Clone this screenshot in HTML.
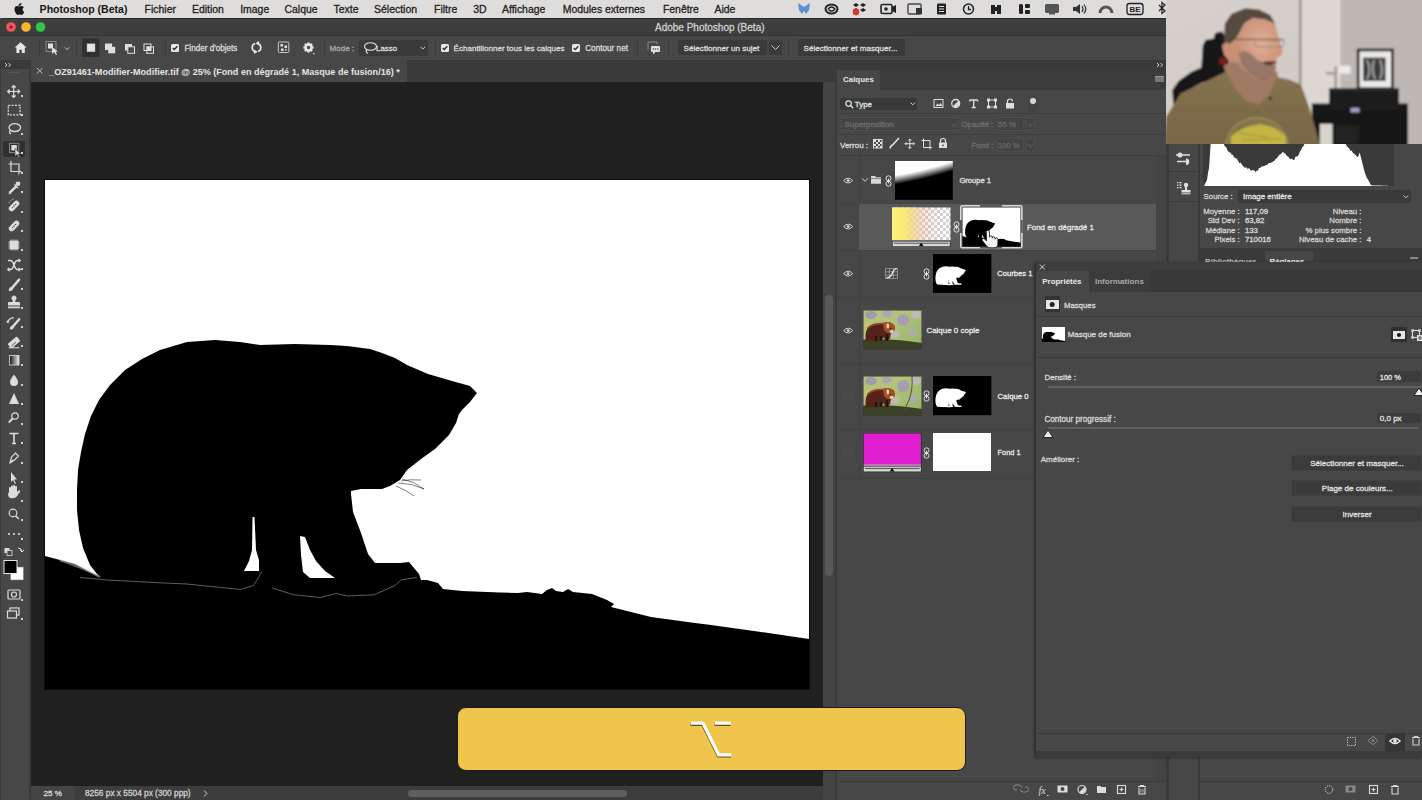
<!DOCTYPE html>
<html><head><meta charset="utf-8">
<style>
*{margin:0;padding:0;box-sizing:border-box}
html,body{width:1422px;height:800px;overflow:hidden;background:#474747;font-family:"Liberation Sans",sans-serif;}
.a{position:absolute}
.t{position:absolute;white-space:nowrap;line-height:1;-webkit-text-stroke:0.3px currentColor}
svg{position:absolute;overflow:visible}
</style></head><body>
<div class="a" style="left:0px;top:0px;width:1166px;height:18px;background:#dfdddc;"></div>
<svg style="left:14px;top:3px" width="11" height="12" viewBox="0 0 11 12"><path fill="#1a1a1a" d="M7.4,0 C7.5,1 7,2 6.3,2.6 C5.7,3.1 5,3.3 4.5,3.2 C4.4,2.3 4.9,1.3 5.5,0.8 C6,0.3 6.8,0 7.4,0 Z M9.9,4.2 C9.1,4.7 8.6,5.5 8.6,6.5 C8.6,7.7 9.3,8.6 10.3,9 C10,9.8 9.6,10.5 9.1,11.1 C8.6,11.7 8.1,12 7.5,12 C6.8,12 6.5,11.6 5.7,11.6 C4.9,11.6 4.5,12 3.9,12 C3.2,12 2.7,11.4 2.2,10.8 C1.2,9.5 0.5,7.7 0.5,6 C0.5,4.1 1.7,2.9 3.1,2.9 C3.9,2.9 4.5,3.4 5.1,3.4 C5.6,3.4 6.3,2.9 7.2,2.9 C8,2.9 9.2,3.2 9.9,4.2 Z"/></svg>
<div class="t" style="left:39.60px;top:4.00px;font-size:10.55px;color:#161616;font-weight:bold;-webkit-text-stroke:0;">Photoshop (Beta)</div>
<div class="t" style="left:144.60px;top:5.00px;font-size:10.45px;color:#222;font-weight:normal;">Fichier</div>
<div class="t" style="left:192.00px;top:5.00px;font-size:10.45px;color:#222;font-weight:normal;">Edition</div>
<div class="t" style="left:240.20px;top:5.00px;font-size:10.45px;color:#222;font-weight:normal;">Image</div>
<div class="t" style="left:284.50px;top:5.00px;font-size:10.45px;color:#222;font-weight:normal;">Calque</div>
<div class="t" style="left:333.50px;top:5.00px;font-size:10.45px;color:#222;font-weight:normal;">Texte</div>
<div class="t" style="left:374.10px;top:5.00px;font-size:10.45px;color:#222;font-weight:normal;">Sélection</div>
<div class="t" style="left:434.00px;top:5.00px;font-size:10.45px;color:#222;font-weight:normal;">Filtre</div>
<div class="t" style="left:473.30px;top:5.00px;font-size:10.45px;color:#222;font-weight:normal;">3D</div>
<div class="t" style="left:502.00px;top:5.00px;font-size:10.45px;color:#222;font-weight:normal;">Affichage</div>
<div class="t" style="left:562.70px;top:5.00px;font-size:10.45px;color:#222;font-weight:normal;">Modules externes</div>
<div class="t" style="left:662.90px;top:5.00px;font-size:10.45px;color:#222;font-weight:normal;">Fenêtre</div>
<div class="t" style="left:714.50px;top:5.00px;font-size:10.45px;color:#222;font-weight:normal;">Aide</div>
<svg style="left:797px;top:2px" width="370" height="14" viewBox="797 2 370 14">
<path fill="#5d8fd6" d="M798,3 L804,7 L810,3 L809,10 L806,14 L804,11 L802,14 L799,10 Z"/>
<ellipse cx="831.5" cy="9" rx="6" ry="4.5" fill="none" stroke="#222" stroke-width="2"/>
<path d="M828,9 q3.5,-4 7,0 q-3.5,4 -7,0" fill="none" stroke="#222" stroke-width="1.3"/>
<path fill="#222" d="M856,3 l3,2 l-3,2 l-3,-2z M863,3 l3,2 l-3,2 l-3,-2z M856,8 l3,2 l-3,2 l-3,-2z M863,8 l3,2 l-3,2 l-3,-2z"/>
<circle cx="856" cy="12" r="3.3" fill="#e0302a"/>
<rect x="881" y="4.5" width="11" height="9" rx="1.5" fill="none" stroke="#222" stroke-width="1.6"/>
<path fill="#222" d="M892,7 l4,-2 v8 l-4,-2z"/><circle cx="886" cy="9" r="1.8" fill="#222"/>
<rect x="908" y="4" width="13" height="10" rx="1" fill="none" stroke="#444" stroke-width="1.4"/>
<rect x="916" y="8" width="6" height="6" fill="#333"/>
<rect x="937" y="3.5" width="9" height="11" rx="1" fill="#222"/><rect x="939" y="6" width="5" height="1" fill="#ddd"/><rect x="939" y="8.5" width="5" height="1" fill="#ddd"/><rect x="939" y="11" width="5" height="1" fill="#ddd"/>
<circle cx="968.5" cy="9" r="5" fill="none" stroke="#222" stroke-width="1.5"/><path d="M968.5,6 v3.5 h2.5" fill="none" stroke="#222" stroke-width="1.3"/>
<path fill="#222" d="M991,5 h4 v2 h2 v-2 h4 v9 h-4 v-3 h-2 v3 h-4z"/>
<rect x="1019" y="4" width="4" height="10" rx="1.5" fill="#222"/><rect x="1025" y="4" width="5" height="4" rx="1" fill="#222"/><rect x="1025" y="10" width="5" height="4" rx="1" fill="#222"/>
<rect x="1045" y="4" width="14" height="9" rx="1.5" fill="#555"/><rect x="1049" y="13" width="6" height="1.5" fill="#555"/>
<path fill="#333" d="M1073,7 h3 l4,-3 v10 l-4,-3 h-3z"/><path d="M1082,6 q2,3 0,6 M1084,4.5 q3.5,4.5 0,9" fill="none" stroke="#333" stroke-width="1.2"/>
<path d="M1100,13 a6,6 0 1 1 12,0" fill="none" stroke="#555" stroke-width="3"/>
<rect x="1127" y="3.5" width="16" height="11" rx="2.5" fill="none" stroke="#222" stroke-width="1.3"/>
<text x="1135" y="12.3" font-size="8" font-weight="bold" text-anchor="middle" fill="#222" font-family="Liberation Sans">BE</text>
<path d="M1159,5 l6,6 l-3,2.5 v-11 l3,2.5 l-6,6" fill="none" stroke="#222" stroke-width="1.2"/>
</svg>
<div class="a" style="left:0px;top:18px;width:1166px;height:17px;background:#3e3e3e;border-top:1px solid #2a2a2a;border-radius:5px 0 0 0"></div>
<div class="a" style="left:4px;top:20px;width:1162px;height:1px;background:#434343;"></div>
<svg style="left:0;top:18px" width="60" height="18"><circle cx="11" cy="9" r="4.8" fill="#f2555b"/><circle cx="11" cy="9" r="1.6" fill="#8a1c22"/><circle cx="26" cy="9" r="4.8" fill="#f7b52e"/><circle cx="40.5" cy="9" r="4.8" fill="#31c847"/></svg>
<div class="t" style="left:655.00px;top:23.00px;font-size:10.0px;color:#cfcfcf;font-weight:normal;">Adobe Photoshop (Beta)</div>
<div class="a" style="left:0px;top:34.5px;width:1166px;height:1.6px;background:#343434;"></div>
<div class="a" style="left:0px;top:36px;width:1166px;height:23.6px;background:#474747;"></div>
<div class="a" style="left:39px;top:40px;width:1px;height:17px;background:#3c3c3c;"></div>
<div class="a" style="left:76px;top:40px;width:1px;height:17px;background:#3c3c3c;"></div>
<div class="a" style="left:164.5px;top:40px;width:1px;height:17px;background:#3c3c3c;"></div>
<div class="a" style="left:324px;top:40px;width:1px;height:17px;background:#3c3c3c;"></div>
<div class="a" style="left:435px;top:40px;width:1px;height:17px;background:#3c3c3c;"></div>
<div class="a" style="left:637px;top:40px;width:1px;height:17px;background:#3c3c3c;"></div>
<div class="a" style="left:668px;top:40px;width:1px;height:17px;background:#3c3c3c;"></div>
<div class="a" style="left:788px;top:40px;width:1px;height:17px;background:#3c3c3c;"></div>
<svg style="left:0;top:36px" width="1166" height="24" viewBox="0 36 1166 24">
<path fill="#e6e6e6" d="M20.6,42.2 L26.6,47.6 L24.8,47.6 L24.8,53 L21.8,53 L21.8,49.7 L19.4,49.7 L19.4,53 L16.4,53 L16.4,47.6 L14.6,47.6 Z"/>
<rect x="46" y="41.5" width="10" height="10" fill="none" stroke="#8a8a8a" stroke-width="1"/>
<rect x="48" y="43.5" width="5" height="5" fill="#e0e0e0"/>
<path fill="#e0e0e0" d="M52,47 L52,54 L54,52 L56,55 L57,54.5 L55.5,51.5 L58,51.5 Z"/>
<path d="M64.8,47.3 l2.3,2.3 l2.3,-2.3" fill="none" stroke="#c8c8c8" stroke-width="1"/>
<rect x="82.3" y="38.5" width="17" height="18.5" rx="1" fill="#303030"/>
<rect x="87" y="43.8" width="8" height="8" fill="#e4e4e4" stroke="#aaa" stroke-width="0.5"/>
<rect x="105" y="43.5" width="7" height="6.5" fill="#e0e0e0"/><rect x="108.2" y="46.8" width="7" height="6.5" fill="#e0e0e0"/>
<rect x="125" y="44" width="7" height="6.5" fill="#e0e0e0"/><rect x="127.8" y="46.8" width="6.7" height="6.5" fill="#484848" stroke="#e0e0e0" stroke-width="1"/>
<rect x="144" y="44" width="7" height="6.5" fill="none" stroke="#e0e0e0" stroke-width="1"/><rect x="146.8" y="46.8" width="6.7" height="6.5" fill="none" stroke="#e0e0e0" stroke-width="1"/><rect x="146.8" y="46.8" width="4.2" height="3.7" fill="#e0e0e0"/>
</svg>
<svg style="left:171px;top:43.8px" width="8" height="8" viewBox="0 0 8 8"><rect x="0" y="0" width="8" height="8" rx="1.5" fill="#e8e8e8"/><path d="M1.8,4 L3.3,5.6 L6.3,2.3" fill="none" stroke="#222" stroke-width="1.3"/></svg>
<div class="t" style="left:184.40px;top:45.00px;font-size:8.15px;color:#d8d8d8;font-weight:normal;">Finder d'objets</div>
<svg style="left:240px;top:36px" width="200" height="24" viewBox="240 36 200 24">
<path d="M255,43.46 A4.3,4.3 0 0 0 255,51.54 M258,51.54 A4.3,4.3 0 0 0 258,43.46" fill="none" stroke="#e6e6e6" stroke-width="1.7"/>
<path fill="#e6e6e6" d="M253.8,49.6 L257.8,51.7 L254,53.9 Z M259.2,41.1 L255.2,43.3 L259,45.4 Z"/>
<rect x="278.3" y="42" width="10.5" height="10.5" rx="1" fill="none" stroke="#c8c8c8" stroke-width="1"/>
<rect x="280.5" y="44" width="2.5" height="2.5" fill="#e0e0e0"/><rect x="284.5" y="45.5" width="2.5" height="2.5" fill="#e0e0e0"/><rect x="281" y="48.5" width="2.5" height="2.5" fill="#e0e0e0"/><rect x="285" y="49" width="1.5" height="1.5" fill="#e0e0e0"/>
<path fill="#e6e6e6" fill-rule="evenodd" d="M313.57,46.37 L313.57,48.63 L312.15,48.87 L312.05,49.11 L312.89,50.29 L311.29,51.89 L310.11,51.05 L309.87,51.15 L309.63,52.57 L307.37,52.57 L307.13,51.15 L306.89,51.05 L305.71,51.89 L304.11,50.29 L304.95,49.11 L304.85,48.87 L303.43,48.63 L303.43,46.37 L304.85,46.13 L304.95,45.89 L304.11,44.71 L305.71,43.11 L306.89,43.95 L307.13,43.85 L307.37,42.43 L309.63,42.43 L309.87,43.85 L310.11,43.95 L311.29,43.11 L312.89,44.71 L312.05,45.89 L312.15,46.13Z M310.2,47.5 A1.7,1.7 0 1 0 306.8,47.5 A1.7,1.7 0 1 0 310.2,47.5Z"/>
<rect x="313" y="53" width="1.5" height="1.2" fill="#ddd"/>
</svg>
<div class="t" style="left:329.60px;top:45.00px;font-size:8.0px;color:#a9a9a9;font-weight:normal;">Mode :</div>
<div class="a" style="left:359px;top:40px;width:68.5px;height:15.5px;background:#3a3a3a;border-radius:2px"></div>
<svg style="left:363px;top:41px" width="16" height="14" viewBox="0 0 16 14"><ellipse cx="7.5" cy="5.5" rx="6" ry="3.8" fill="none" stroke="#e0e0e0" stroke-width="1.1"/><path d="M3.5,8.5 q-1,3 1.5,4" fill="none" stroke="#e0e0e0" stroke-width="1.1"/></svg>
<div class="t" style="left:376.10px;top:45.00px;font-size:7.9px;color:#dcdcdc;font-weight:normal;">Lasso</div>
<svg style="left:420px;top:46px" width="6" height="4"><path d="M0.5,0.8 l2.3,2.3 l2.3,-2.3" fill="none" stroke="#cfcfcf" stroke-width="1"/></svg>
<svg style="left:440.8px;top:43.8px" width="8" height="8" viewBox="0 0 8 8"><rect x="0" y="0" width="8" height="8" rx="1.5" fill="#e8e8e8"/><path d="M1.8,4 L3.3,5.6 L6.3,2.3" fill="none" stroke="#222" stroke-width="1.3"/></svg>
<div class="t" style="left:453.60px;top:45.00px;font-size:8.05px;color:#d8d8d8;font-weight:normal;">Échantillonner tous les calques</div>
<svg style="left:572.4px;top:43.8px" width="8" height="8" viewBox="0 0 8 8"><rect x="0" y="0" width="8" height="8" rx="1.5" fill="#e8e8e8"/><path d="M1.8,4 L3.3,5.6 L6.3,2.3" fill="none" stroke="#222" stroke-width="1.3"/></svg>
<div class="t" style="left:585.20px;top:45.00px;font-size:8.2px;color:#d8d8d8;font-weight:normal;">Contour net</div>
<svg style="left:647px;top:41px" width="14" height="14" viewBox="0 0 14 14"><path d="M1,9 V1 H10 V3" fill="none" stroke="#8a8a8a" stroke-width="1"/><rect x="4" y="5" width="9" height="6" rx="1" fill="#e0e0e0"/><path fill="#e0e0e0" d="M6,11 L6,13.5 L8.5,11z"/><circle cx="6.3" cy="8" r="0.8" fill="#484848"/><circle cx="8.5" cy="8" r="0.8" fill="#484848"/><circle cx="10.7" cy="8" r="0.8" fill="#484848"/></svg>
<div class="a" style="left:678px;top:39.9px;width:88.5px;height:15.5px;background:#3a3a3a;border-radius:2px"></div>
<div class="t" style="left:683.60px;top:45.00px;font-size:8.12px;color:#dcdcdc;font-weight:normal;">Sélectionner un sujet</div>
<div class="a" style="left:769px;top:39.9px;width:13px;height:15.5px;background:#3a3a3a;border-radius:2px"></div>
<svg style="left:771px;top:45px" width="9" height="5"><path d="M0.5,0.5 l4,4 l4,-4" fill="none" stroke="#cfcfcf" stroke-width="1"/></svg>
<div class="a" style="left:797.7px;top:39.4px;width:107px;height:16.3px;background:#3a3a3a;border-radius:2px"></div>
<div class="t" style="left:803.60px;top:45.00px;font-size:8.08px;color:#dcdcdc;font-weight:normal;">Sélectionner et masquer...</div>
<div class="a" style="left:0px;top:60px;width:31px;height:740px;background:#3a3a3a;"></div>
<div class="a" style="left:1.3px;top:60px;width:27.7px;height:740px;background:#474747;"></div>
<div class="a" style="left:1.3px;top:60px;width:27.7px;height:8.8px;background:#393939;"></div>
<div class="a" style="left:8px;top:72px;width:12px;height:1.2px;background:#555;"></div>
<svg style="left:4px;top:62px" width="12" height="6" viewBox="0 0 12 6"><path d="M1,1 l2,2 l-2,2 M4.5,1 l2,2 l-2,2" fill="none" stroke="#cfcfcf" stroke-width="1"/></svg>
<div class="a" style="left:3px;top:140.6px;width:22px;height:16.5px;background:#2f2f2f;border-radius:2px"></div>
<svg style="left:0;top:80px" width="30" height="545" viewBox="0 80 30 545" fill="none" stroke="#dcdcdc" stroke-width="1.2">
<path d="M13.7,85.5 v12 M7.7,91.5 h12 M11.7,87.5 l2,-2 l2,2 M11.7,95.5 l2,2 l2,-2 M9.7,89.5 l-2,2 l2,2 M17.7,89.5 l2,2 l-2,2"/>
<rect x="8.3" y="105.3" width="11.8" height="9.6" stroke-dasharray="2 1.3" stroke-width="1.3"/>
<ellipse cx="14.8" cy="127.6" rx="5.8" ry="3.9" stroke-width="1.3"/><path d="M10.5,130.3 q-2,2.2 0.5,3.6" stroke-width="1.3"/>
<rect x="9.5" y="143.3" width="9.3" height="9.3" stroke="#8a8a8a" stroke-width="1"/><rect x="11.3" y="145" width="5.5" height="5.5" fill="#dcdcdc" stroke="none"/><path d="M15,148.5 v8 l2,-2 l1.8,3 l1.1,-0.6 l-1.6,-2.8 h2.6z" fill="#dcdcdc" stroke="#2f2f2f" stroke-width="0.6"/>
<path d="M11,161 v10.5 h10.5 M8.5,164 h10.5 v10.5"/>
<path fill="#dcdcdc" stroke="none" d="M8.5,194.5 L9.2,191.5 L15,185.7 L16.8,187.5 L11,193.3 Z"/><circle cx="18" cy="183.8" r="2.3" fill="#dcdcdc" stroke="none"/><path d="M14.5,184.5 l3.5,3.5" stroke-width="1.4"/>
<rect x="7.8" y="203.2" width="12.5" height="5.6" rx="2.8" fill="#dcdcdc" stroke="none" transform="rotate(-45 14 206)"/><circle cx="14" cy="206" r="0.8" fill="#474747" stroke="none"/><circle cx="12.4" cy="207.6" r="0.7" fill="#474747" stroke="none"/><circle cx="15.6" cy="204.4" r="0.7" fill="#474747" stroke="none"/><path d="M9,203 a6,6 0 0 1 5,-4" stroke-dasharray="1 1" stroke-width="1"/>
<rect x="7.8" y="223.2" width="12.5" height="5.6" rx="2.8" fill="#dcdcdc" stroke="none" transform="rotate(-45 14 226)"/><circle cx="14" cy="226" r="0.8" fill="#474747" stroke="none"/><circle cx="12.4" cy="227.6" r="0.7" fill="#474747" stroke="none"/><circle cx="15.6" cy="224.4" r="0.7" fill="#474747" stroke="none"/>
<rect x="9.8" y="240.8" width="8.5" height="8.5" fill="#dcdcdc" stroke="none"/><path d="M11,239.5 v1.5 M13,239.5 v1.5 M15,239.5 v1.5 M17,239.5 v1.5 M11,249 v1.5 M13,249 v1.5 M15,249 v1.5 M17,249 v1.5 M8.5,242 h1.5 M8.5,244 h1.5 M8.5,246 h1.5 M8.5,248 h1.5 M18,242 h1.5 M18,244 h1.5 M18,246 h1.5 M18,248 h1.5" stroke-width="0.9"/>
<path d="M8,260.5 h2.5 q2,0 3.5,4.5 q1.5,4.5 3.5,4.5 h2.5 M8,269.5 h2.5 q2,0 3.5,-4.5 q1.5,-4.5 3.5,-4.5 h2.5" stroke-width="1.5"/><path fill="#dcdcdc" stroke="none" d="M18.5,258.3 l2.8,2.2 l-2.8,2.2z M18.5,267.3 l2.8,2.2 l-2.8,2.2z M9.5,267.3 l-2.8,2.2 l2.8,2.2z"/>
<path fill="#dcdcdc" stroke="none" d="M8.8,291 q-0.3,-3.5 2.8,-4.6 l6.6,-7.6 q1,-0.9 1.8,0 q0.8,0.8 0,1.8 l-6.6,7.6 q-0.8,3 -4.6,2.8z"/>
<path fill="#dcdcdc" stroke="none" d="M12.6,302 v-2 a2.4,2.4 0 1 1 2.8,0 v2 h3.6 q1,0 1,1 v2.6 h-12 v-2.6 q0,-1 1,-1z M8,306.6 h12 v1.6 h-12z"/>
<path fill="#dcdcdc" stroke="none" d="M10,329.5 q-0.3,-3.2 2.5,-4.2 l6,-7 q0.9,-0.8 1.6,0 q0.7,0.7 0,1.6 l-6,7 q-0.7,2.8 -4.1,2.6z"/><path d="M8,322 a5,5 0 0 1 6,-4" stroke-width="1.2"/><path fill="#dcdcdc" stroke="none" d="M7,320 l2.5,2.5 l-3,0.5z"/>
<rect x="8" y="339.5" width="12" height="6" rx="1" fill="#dcdcdc" stroke="none" transform="rotate(-40 14 342.5)"/><path d="M8.5,347.8 h11" stroke-width="1"/><path d="M11.5,346 l4.5,-4" stroke="#474747" stroke-width="0.9"/>
<defs><linearGradient id="gr"><stop offset="0" stop-color="#111"/><stop offset="1" stop-color="#eee"/></linearGradient></defs><rect x="9.5" y="355.5" width="9.5" height="9.5" fill="url(#gr)" stroke="#ddd" stroke-width="0.8"/>
<path d="M14,374.5 q-4,5 -4,7.5 a4,4 0 0 0 8,0 q0,-2.5 -4,-7.5z" fill="#dcdcdc" stroke="none"/>
<path d="M14,393 l5,11 h-10z" fill="#dcdcdc" stroke="none"/>
<circle cx="15" cy="416" r="3.2"/><path d="M12.7,418.5 l-4,4" stroke-width="1.8"/>
<path d="M9.5,433.5 h9 M14,433.5 v10 M12,443.5 h4" stroke-width="1.6"/>
<path d="M10,463 l1.5,-6 l4,-4 l3,3 l-4,4z M10,463 l3,-3"/>
<path d="M11,472 v10 l2,-2 l2,4 l1,-0.5 l-2,-4 h3z" fill="#dcdcdc" stroke="none"/>
<path fill="#dcdcdc" stroke="none" d="M9,492 v-4 a1,1 0 0 1 2,0 v-1.5 a1,1 0 0 1 2,0 v-0.5 a1,1 0 0 1 2,0 v1 a1,1 0 0 1 2,0 v5 l1.5,-1.5 a1,1 0 0 1 1.5,1.3 l-3,4.5 q-1.5,2 -4,2 h-1 q-4,0 -4,-4.5z"/>
<circle cx="13" cy="513" r="3.8"/><path d="M15.8,516 l3,3" stroke-width="1.6"/>
<circle cx="9" cy="534" r="1.1" fill="#dcdcdc" stroke="none"/><circle cx="14" cy="534" r="1.1" fill="#dcdcdc" stroke="none"/><circle cx="19" cy="534" r="1.1" fill="#dcdcdc" stroke="none"/>
<rect x="4.5" y="548" width="5" height="5" fill="#dcdcdc" stroke="none"/><rect x="7" y="550.5" width="5" height="5" fill="#474747" stroke="#dcdcdc" stroke-width="0.8"/>
<path d="M18,548 q4,0 4,4 M20,550 l2,2 l2,-2" stroke-width="1"/>
<rect x="10.5" y="567" width="13" height="13" fill="#fff" stroke="#777" stroke-width="0.6"/>
<rect x="4" y="560.5" width="13" height="13" fill="#000" stroke="#e8e8e8" stroke-width="1"/>
<rect x="8" y="590" width="12" height="9" rx="1"/><circle cx="14" cy="594.5" r="2.5"/>
<rect x="10" y="608" width="9" height="7"/><rect x="7.5" y="611" width="9" height="7" fill="#474747"/>
</svg>
<div class="a" style="left:21px;top:95px;width:1.5px;height:1.5px;background:#cfcfcf"></div>
<div class="a" style="left:21px;top:114px;width:1.5px;height:1.5px;background:#cfcfcf"></div>
<div class="a" style="left:21px;top:133px;width:1.5px;height:1.5px;background:#cfcfcf"></div>
<div class="a" style="left:21px;top:152px;width:1.5px;height:1.5px;background:#cfcfcf"></div>
<div class="a" style="left:21px;top:172px;width:1.5px;height:1.5px;background:#cfcfcf"></div>
<div class="a" style="left:21px;top:191px;width:1.5px;height:1.5px;background:#cfcfcf"></div>
<div class="a" style="left:21px;top:211px;width:1.5px;height:1.5px;background:#cfcfcf"></div>
<div class="a" style="left:21px;top:230px;width:1.5px;height:1.5px;background:#cfcfcf"></div>
<div class="a" style="left:21px;top:249px;width:1.5px;height:1.5px;background:#cfcfcf"></div>
<div class="a" style="left:21px;top:268px;width:1.5px;height:1.5px;background:#cfcfcf"></div>
<div class="a" style="left:21px;top:288px;width:1.5px;height:1.5px;background:#cfcfcf"></div>
<div class="a" style="left:21px;top:307px;width:1.5px;height:1.5px;background:#cfcfcf"></div>
<div class="a" style="left:21px;top:326px;width:1.5px;height:1.5px;background:#cfcfcf"></div>
<div class="a" style="left:21px;top:345px;width:1.5px;height:1.5px;background:#cfcfcf"></div>
<div class="a" style="left:21px;top:364px;width:1.5px;height:1.5px;background:#cfcfcf"></div>
<div class="a" style="left:21px;top:384px;width:1.5px;height:1.5px;background:#cfcfcf"></div>
<div class="a" style="left:21px;top:403px;width:1.5px;height:1.5px;background:#cfcfcf"></div>
<div class="a" style="left:21px;top:423px;width:1.5px;height:1.5px;background:#cfcfcf"></div>
<div class="a" style="left:21px;top:442px;width:1.5px;height:1.5px;background:#cfcfcf"></div>
<div class="a" style="left:21px;top:462px;width:1.5px;height:1.5px;background:#cfcfcf"></div>
<div class="a" style="left:21px;top:481px;width:1.5px;height:1.5px;background:#cfcfcf"></div>
<div class="a" style="left:21px;top:500px;width:1.5px;height:1.5px;background:#cfcfcf"></div>
<div class="a" style="left:21px;top:519px;width:1.5px;height:1.5px;background:#cfcfcf"></div>
<div class="a" style="left:21px;top:538px;width:1.5px;height:1.5px;background:#cfcfcf"></div>
<div class="a" style="left:21px;top:599px;width:1.5px;height:1.5px;background:#cfcfcf"></div>
<div class="a" style="left:21px;top:618px;width:1.5px;height:1.5px;background:#cfcfcf"></div>
<div class="a" style="left:29px;top:60px;width:806px;height:22px;background:#3a3a3a;"></div>
<div class="a" style="left:31px;top:60px;width:376px;height:22px;background:#474747;"></div>
<svg style="left:36px;top:67px" width="8" height="8"><path d="M1,1 l5.5,5.5 M6.5,1 l-5.5,5.5" stroke="#bdbdbd" stroke-width="1"/></svg>
<div class="t" style="left:49.10px;top:68.00px;font-size:9.06px;color:#e4e4e4;font-weight:bold;-webkit-text-stroke:0;">_OZ91461-Modifier-Modifier.tif @ 25% (Fond en dégradé 1, Masque de fusion/16) *</div>
<div class="a" style="left:31px;top:82px;width:792px;height:704px;background:#202020;"></div>
<svg style="left:44px;top:179px" width="766" height="511" viewBox="44 179 766 511">
<rect x="44" y="179" width="766" height="511" fill="#0a0a0a"/>
<rect x="45" y="180" width="764" height="509" fill="#fff"/>
<defs><clipPath id="imgc"><rect x="45" y="180" width="764" height="509"/></clipPath><filter id="fur" x="-5%" y="-5%" width="110%" height="110%"><feGaussianBlur stdDeviation="0.55"/></filter></defs>
<g clip-path="url(#imgc)"><g filter="url(#fur)">
<path fill="#000" d="M40,555 L45,556 L60,560 L75,564 L90,572 L103,578 L155,582 L264,587 L330,581 L421,580 L427,580 L438,583 L443,589 L462,591 L500,592.5 L518,593 L527,592 L542,594 L547,590 L552,588 L556,591 L563,592 L568,589 L573,592 L592,594 L607,600 L614,604 L611,607 L627,611 L651,617 L695,623 L711,625 L754,631 L809,639 L814,640 L814,694 L40,694 Z M100,578 L90,565 L83,548 L79,530 L77,510 L77,490 L78,470 L81,452 L85,434 L91,416 L99,400 L110,385 L125,370 L142,359 L160,350 L187,342 L215,340 L240,342 L260,345 L295,344 L330,345 L347,346 L370,349 L382,353 L395,358 L407,365 L428,374 L452,381 L470,386 L477,393 L470,402 L462,410 L459,414 L456,423 L449,435 L435,449 L421,459 L407,470 L400,480 L390,486 L382,489 L361,489 L351,491 L351,494 L353,512 L361,533 L368,554 L375,563 L400,563 L409,562 L414,568 L419,574 L421,580 L400,583 L330,581 L264,587 L155,582 Z"/>
<path fill="#fff" d="M252.5,517 L254.5,517 L256,550 L259,560 L259,571 L244,571 L249,561 L252,550 Z M300,536 L305,537 L310,550 L316,561 L325,571 L335,578 L310,578 L303,572 L301,555 Z"/>
</g></g>
<path d="M80,577.4 L106.7,580 L133.4,581.4 L160,582.8 L187,584 L213.6,586.8 L240.3,589.4 L253.7,585.4 L261.7,572 M272.4,588 L293.8,594.8 L320.5,597.5 L336.5,593.4 L347.2,596 L374,594.8 L395.3,585.4 L400.7,580 L416.7,577.4" fill="none" stroke="#a8a8a8" stroke-width="0.7" stroke-opacity="0.8"/>
<path d="M60,560 Q85,568 100,577" fill="none" stroke="#cfcfcf" stroke-width="2.5" stroke-opacity="0.5"/>
<path d="M402,479 q12,2 22,10 M398,483 q14,0 26,6 M396,486 q10,4 18,10 M401,481 q9,-2 20,-1" fill="none" stroke="#000" stroke-width="0.5"/>
</svg>
<div class="a" style="left:31px;top:786px;width:792px;height:14px;background:#3d3d3d;"></div>
<div class="a" style="left:31px;top:786px;width:43px;height:14px;background:#444;"></div>
<div class="t" style="left:43.60px;top:790.00px;font-size:8.1px;color:#dadada;font-weight:normal;">25 %</div>
<div class="t" style="left:85.00px;top:789.00px;font-size:8.3px;color:#cfcfcf;font-weight:normal;">8256 px x 5504 px (300 ppp)</div>
<svg style="left:203px;top:790px" width="6" height="8"><path d="M1,0.5 l3,3 l-3,3" fill="none" stroke="#cfcfcf" stroke-width="1"/></svg>
<div class="a" style="left:408px;top:790px;width:219px;height:7px;background:#5e5e5e;border-radius:3.5px"></div>
<div class="a" style="left:823px;top:82px;width:12px;height:718px;background:#444;"></div>
<div class="a" style="left:824.8px;top:295px;width:8.2px;height:280.5px;background:#595959;border-radius:4px"></div>
<div class="a" style="left:835px;top:60px;width:331px;height:740px;background:#3a3a3a;"></div>
<div class="a" style="left:837px;top:60px;width:329px;height:10px;background:#3a3a3a;"></div>
<svg style="left:1156px;top:62px" width="8" height="6"><path d="M1,1 l2,2 l-2,2 M4.5,1 l2,2 l-2,2" fill="none" stroke="#cfcfcf" stroke-width="1"/></svg>
<div class="a" style="left:837px;top:70px;width:329px;height:20px;background:#3c3c3c;"></div>
<div class="a" style="left:837px;top:70px;width:43px;height:20px;background:#474747;"></div>
<div class="t" style="left:843.10px;top:76.00px;font-size:7.9px;color:#e8e8e8;font-weight:bold;-webkit-text-stroke:0;">Calques</div>
<div class="a" style="left:1155px;top:76px;width:9px;height:6px;background:#777;border-top:1px solid #999"></div>
<div class="a" style="left:837px;top:90px;width:329px;height:710px;background:#474747;"></div>
<div class="a" style="left:840px;top:98px;width:77px;height:12px;background:#383838;border-radius:2px"></div>
<svg style="left:845px;top:100px" width="9" height="9"><circle cx="3.6" cy="3.6" r="2.7" fill="none" stroke="#e0e0e0" stroke-width="1.2"/><path d="M5.6,5.6 l2.6,2.6" stroke="#e0e0e0" stroke-width="1.4"/></svg>
<div class="t" style="left:854.80px;top:101.00px;font-size:7.9px;color:#e0e0e0;font-weight:normal;">Type</div>
<svg style="left:910px;top:102px" width="6" height="4"><path d="M0.5,0.5 l2.3,2.3 l2.3,-2.3" fill="none" stroke="#cfcfcf" stroke-width="1"/></svg>
<svg style="left:930px;top:96px" width="110" height="16" viewBox="930 96 110 16" fill="none" stroke="#dedede" stroke-width="1">
<rect x="934" y="99.5" width="9" height="8" /><path d="M935.5,106 l2,-2.5 l1.5,1.5 l1.5,-2 l2,3z" fill="#dedede" stroke="none"/>
<circle cx="955.7" cy="103.5" r="4" stroke-width="1.3"/><path d="M958.5,100.7 a4,4 0 0 1 -5.6,5.6z" fill="#dedede" stroke="none"/>
<path d="M969.7,100 h8 M973.7,100 v7.5 M971.7,107.5 h4 M969.7,100 v1.5 M977.7,100 v1.5" stroke-width="1.3"/>
<rect x="988.5" y="100" width="7" height="7"/><rect x="987.5" y="99" width="2" height="2" fill="#dedede"/><rect x="994.5" y="99" width="2" height="2" fill="#dedede"/><rect x="987.5" y="106" width="2" height="2" fill="#dedede"/><rect x="994.5" y="106" width="2" height="2" fill="#dedede"/>
<rect x="1006" y="103" width="8" height="5.5" fill="#dedede" stroke="none"/><path d="M1007.5,103 v-1.5 a2.5,2.5 0 0 1 5,0" stroke-width="1.2"/>
<rect x="1029.5" y="100" width="7" height="11" rx="3.5" stroke="#3a3a3a" fill="#444"/><circle cx="1033" cy="101" r="3" fill="#d6d6d6" stroke="none"/>
</svg>
<div class="a" style="left:837px;top:113px;width:329px;height:1px;background:#3e3e3e;"></div>
<div class="a" style="left:841px;top:117px;width:117px;height:13.5px;background:#444;border:1px solid #4c4c4c;border-radius:2px"></div>
<div class="t" style="left:844.60px;top:121.00px;font-size:8.06px;color:#6e6e6e;font-weight:normal;">Superposition</div>
<svg style="left:951px;top:123px" width="6" height="4"><path d="M0.5,0.5 l2.3,2.3 l2.3,-2.3" fill="none" stroke="#666" stroke-width="1"/></svg>
<div class="t" style="left:961.40px;top:121.00px;font-size:7.97px;color:#6e6e6e;font-weight:normal;">Opacité :</div>
<div class="a" style="left:997px;top:117px;width:27px;height:13.5px;background:#434343;border:1px solid #4c4c4c"></div>
<div class="t" style="left:998.10px;top:121.00px;font-size:7.8px;color:#666;font-weight:normal;">55 %</div>
<div class="a" style="left:1026px;top:117px;width:9px;height:13.5px;background:#434343;border:1px solid #4c4c4c"></div>
<svg style="left:1028px;top:123px" width="6" height="4"><path d="M0.5,0.5 l2.3,2.3 l2.3,-2.3" fill="none" stroke="#666" stroke-width="1"/></svg>
<div class="a" style="left:837px;top:134px;width:329px;height:1px;background:#3e3e3e;"></div>
<div class="t" style="left:840.00px;top:142.00px;font-size:8.02px;color:#dadada;font-weight:normal;">Verrou :</div>
<svg style="left:870px;top:136px" width="80" height="16" viewBox="870 136 80 16" fill="none" stroke="#e0e0e0">
<rect x="873.5" y="139.5" width="8.5" height="8.5" stroke-width="1"/><rect x="874" y="140" width="2" height="2" fill="#e0e0e0" stroke="none"/><rect x="878" y="140" width="2" height="2" fill="#e0e0e0" stroke="none"/><rect x="876" y="142" width="2" height="2" fill="#e0e0e0" stroke="none"/><rect x="880" y="142" width="2" height="2" fill="#e0e0e0" stroke="none"/><rect x="874" y="144" width="2" height="2" fill="#e0e0e0" stroke="none"/><rect x="878" y="144" width="2" height="2" fill="#e0e0e0" stroke="none"/><rect x="876" y="146" width="2" height="2" fill="#e0e0e0" stroke="none"/><rect x="880" y="146" width="2" height="2" fill="#e0e0e0" stroke="none"/>
<path d="M890,148.5 q0.5,-3 2.5,-3.5 l6.5,-7" stroke-width="1.6"/>
<path d="M909.8,139 v9.5 M905,143.7 h9.5 M908.3,140.5 l1.5,-1.5 l1.5,1.5 M908.3,147 l1.5,1.5 l1.5,-1.5 M906.5,142.2 l-1.5,1.5 l1.5,1.5 M913,142.2 l1.5,1.5 l-1.5,1.5" stroke-width="1"/>
<path d="M923.5,138.5 v9 h8.5 M921.5,140.5 h8.5 v9" stroke-width="1"/>
<rect x="939" y="142.5" width="8" height="5.5" fill="#e0e0e0" stroke="none"/><path d="M940.5,142.5 v-1.5 a2.5,2.5 0 0 1 5,0 v1.5" stroke-width="1.2"/><circle cx="943" cy="145.3" r="0.9" fill="#474747" stroke="none"/>
</svg>
<div class="t" style="left:971.50px;top:142.00px;font-size:7.7px;color:#6e6e6e;font-weight:normal;">Fond :</div>
<div class="a" style="left:997px;top:138px;width:27px;height:13.5px;background:#434343;border:1px solid #4c4c4c"></div>
<div class="t" style="left:998.10px;top:142.00px;font-size:7.6px;color:#666;font-weight:normal;">100 %</div>
<div class="a" style="left:1026px;top:138px;width:9px;height:13.5px;background:#434343;border:1px solid #4c4c4c"></div>
<svg style="left:1028px;top:144px" width="6" height="4"><path d="M0.5,0.5 l2.3,2.3 l2.3,-2.3" fill="none" stroke="#666" stroke-width="1"/></svg>
<div class="a" style="left:837px;top:155px;width:329px;height:1px;background:#3e3e3e;"></div>
<div class="a" style="left:858.5px;top:156px;width:1px;height:322px;background:#404040;"></div>
<div class="a" style="left:1156px;top:156px;width:10px;height:625px;background:#444;"></div>
<div class="a" style="left:837px;top:203.5px;width:319px;height:1px;background:#404040;"></div>
<div class="a" style="left:837px;top:249.5px;width:319px;height:1px;background:#404040;"></div>
<div class="a" style="left:837px;top:296.7px;width:319px;height:1px;background:#404040;"></div>
<div class="a" style="left:837px;top:362.8px;width:319px;height:1px;background:#404040;"></div>
<div class="a" style="left:837px;top:429.3px;width:319px;height:1px;background:#404040;"></div>
<div class="a" style="left:837px;top:478px;width:319px;height:1px;background:#404040;"></div>
<div class="a" style="left:859px;top:204px;width:297px;height:45.5px;background:#595959;"></div>
<svg style="left:843.0px;top:176.9px" width="10.4" height="7.2" viewBox="0 0 10.4 7.2"><path d="M0.7,3.6 Q5.2,-1.2 9.7,3.6 Q5.2,8.4 0.7,3.6z" fill="none" stroke="#d4d4d4" stroke-width="1"/><circle cx="5.2" cy="3.6" r="1.45" fill="#d4d4d4"/></svg>
<svg style="left:843.0px;top:223.4px" width="10.4" height="7.2" viewBox="0 0 10.4 7.2"><path d="M0.7,3.6 Q5.2,-1.2 9.7,3.6 Q5.2,8.4 0.7,3.6z" fill="none" stroke="#d4d4d4" stroke-width="1"/><circle cx="5.2" cy="3.6" r="1.45" fill="#d4d4d4"/></svg>
<svg style="left:843.0px;top:270.2px" width="10.4" height="7.2" viewBox="0 0 10.4 7.2"><path d="M0.7,3.6 Q5.2,-1.2 9.7,3.6 Q5.2,8.4 0.7,3.6z" fill="none" stroke="#d4d4d4" stroke-width="1"/><circle cx="5.2" cy="3.6" r="1.45" fill="#d4d4d4"/></svg>
<svg style="left:843.0px;top:326.9px" width="10.4" height="7.2" viewBox="0 0 10.4 7.2"><path d="M0.7,3.6 Q5.2,-1.2 9.7,3.6 Q5.2,8.4 0.7,3.6z" fill="none" stroke="#d4d4d4" stroke-width="1"/><circle cx="5.2" cy="3.6" r="1.45" fill="#d4d4d4"/></svg>
<div class="a" style="left:844px;top:392.5px;width:8px;height:8px;background:transparent;border:1px solid #4f4f4f;border-radius:1px"></div>
<div class="a" style="left:844px;top:448.5px;width:8px;height:8px;background:transparent;border:1px solid #4f4f4f;border-radius:1px"></div>
<svg style="left:861px;top:176px" width="22" height="9" viewBox="861 176 22 9"><path d="M862,178.3 l3,3 l3,-3" fill="none" stroke="#d8d8d8" stroke-width="1"/><path d="M871,176 h4 l1,1.2 h5 v6.6 h-10z" fill="#d8d8d8"/><path d="M871,178.6 h10" stroke="#474747" stroke-width="0.6"/></svg>
<svg style="left:885.2px;top:174.5px" width="7" height="12" viewBox="0 0 7 12"><rect x="1" y="0.8" width="5" height="5" rx="2.5" fill="none" stroke="#e0e0e0" stroke-width="1"/><rect x="1" y="6.2" width="5" height="5" rx="2.5" fill="none" stroke="#e0e0e0" stroke-width="1"/><path d="M3.5,3.5 v5" stroke="#e0e0e0" stroke-width="1"/></svg>
<svg style="left:895.3px;top:160.9px" width="57.8" height="38.8" viewBox="0 0 57.8 38.8">
<defs><radialGradient id="g1" cx="-78" cy="-432" r="462.2" gradientUnits="userSpaceOnUse"><stop offset="0.9805" stop-color="#fff"/><stop offset="0.9903" stop-color="#858585"/><stop offset="1" stop-color="#000"/></radialGradient></defs>
<rect width="57.8" height="38.8" fill="url(#g1)"/></svg>
<div class="t" style="left:959.40px;top:177.00px;font-size:7.6px;color:#e0e0e0;font-weight:normal;">Groupe 1</div>
<svg style="left:892px;top:207px" width="58.5" height="40" viewBox="0 0 58.5 40">
<defs><pattern id="ck" width="6" height="6" patternUnits="userSpaceOnUse"><rect width="6" height="6" fill="#fff"/><rect width="3" height="3" fill="#cfcfd4"/><rect x="3" y="3" width="3" height="3" fill="#cfcfd4"/></pattern>
<linearGradient id="yg" x1="0" x2="1" y1="0" y2="0"><stop offset="0" stop-color="#fbf27a"/><stop offset="0.25" stop-color="#f8e87a" stop-opacity="1"/><stop offset="0.6" stop-color="#f0b0a0" stop-opacity="0.25"/><stop offset="1" stop-color="#fff" stop-opacity="0"/></linearGradient></defs>
<rect x="0" y="0.5" width="58.5" height="33" fill="url(#ck)"/><rect x="0" y="0.5" width="58.5" height="33" fill="url(#yg)"/>
<rect x="0" y="33.5" width="58.5" height="6.5" fill="#2c2c2c"/><rect x="0.7" y="33.5" width="57.1" height="1.2" fill="#6e6e6e"/><rect x="0.7" y="34.7" width="57.1" height="4.6" fill="#d6d6d6"/><rect x="2" y="35.7" width="54.5" height="1" fill="#555"/><path d="M26.8,39 L29.2,35.7 L31.6,39Z" fill="#000"/>
</svg>
<svg style="left:952.8px;top:220.7px" width="7" height="12" viewBox="0 0 7 12"><rect x="1" y="0.8" width="5" height="5" rx="2.5" fill="none" stroke="#e0e0e0" stroke-width="1"/><rect x="1" y="6.2" width="5" height="5" rx="2.5" fill="none" stroke="#e0e0e0" stroke-width="1"/><path d="M3.5,3.5 v5" stroke="#e0e0e0" stroke-width="1"/></svg>
<svg style="left:960.2px;top:205.2px" width="62.7" height="43.5" viewBox="0 0 62.7 43.5">
<rect x="0.8" y="0.8" width="61.1" height="41.9" fill="none" stroke="#d8d8d8" stroke-width="1.6" rx="1.5"/>
<rect x="20" y="0" width="22" height="2" fill="#595959"/><rect x="20" y="41.5" width="22" height="2" fill="#595959"/><rect x="0" y="15" width="2" height="13" fill="#595959"/><rect x="60.7" y="15" width="2" height="13" fill="#595959"/>
<g transform="translate(2.7 2.6) scale(0.07539 0.07603) translate(-45 -180)">
<rect x="45" y="180" width="764" height="509" fill="#fff"/>
<path fill="#000" d="M40,555 L45,556 L60,560 L75,564 L90,572 L103,578 L155,582 L264,587 L330,581 L421,580 L427,580 L438,583 L443,589 L462,591 L500,592.5 L518,593 L527,592 L542,594 L547,590 L552,588 L556,591 L563,592 L568,589 L573,592 L592,594 L607,600 L614,604 L611,607 L627,611 L651,617 L695,623 L711,625 L754,631 L809,639 L814,640 L814,694 L40,694 Z M100,578 L90,565 L83,548 L79,530 L77,510 L77,490 L78,470 L81,452 L85,434 L91,416 L99,400 L110,385 L125,370 L142,359 L160,350 L187,342 L215,340 L240,342 L260,345 L295,344 L330,345 L347,346 L370,349 L382,353 L395,358 L407,365 L428,374 L452,381 L470,386 L477,393 L470,402 L462,410 L459,414 L456,423 L449,435 L435,449 L421,459 L407,470 L400,480 L390,486 L382,489 L361,489 L351,491 L351,494 L353,512 L361,533 L368,554 L375,563 L400,563 L409,562 L414,568 L419,574 L421,580 L400,583 L330,581 L264,587 L155,582 Z"/><path fill="#fff" d="M252.5,517 L254.5,517 L256,550 L259,560 L259,571 L244,571 L249,561 L252,550 Z M300,536 L305,537 L310,550 L316,561 L325,571 L335,578 L310,578 L303,572 L301,555 Z"/>
</g>
<g transform="translate(21.5 25.2)"><path fill="#f2f2f2" stroke="#1a1a1a" stroke-width="0.8" d="M5,1.6 a1.5,1.5 0 0 1 3,0 V7 a1.4,1.4 0 0 1 2.8,0 V8 a1.4,1.4 0 0 1 2.8,0 V9 a1.4,1.4 0 0 1 2.8,0 V13 q0,4.6 -4,4.6 H8.5 q-2,0 -3.5,-2 L0.9,10.5 q-0.8,-1.3 0.4,-2 q1,-0.6 2,0.4 L5,10.8 Z"/></g>
</svg>
<div class="t" style="left:1026.90px;top:224.00px;font-size:7.93px;color:#e6e6e6;font-weight:normal;">Fond en dégradé 1</div>
<svg style="left:885px;top:268px" width="13" height="11" viewBox="0 0 13 11"><path d="M0.5,0.5 h12 v10 h-12z M4.5,0.5 v10 M8.5,0.5 v10 M0.5,3.8 h12 M0.5,7.2 h12" fill="none" stroke="#aaa" stroke-width="0.7"/><path d="M1.5,10 q5,-1 6,-5 t4.5,-4.5" fill="none" stroke="#eee" stroke-width="1.2"/></svg>
<svg style="left:923.0px;top:268px" width="7" height="12" viewBox="0 0 7 12"><rect x="1" y="0.8" width="5" height="5" rx="2.5" fill="none" stroke="#e0e0e0" stroke-width="1"/><rect x="1" y="6.2" width="5" height="5" rx="2.5" fill="none" stroke="#e0e0e0" stroke-width="1"/><path d="M3.5,3.5 v5" stroke="#e0e0e0" stroke-width="1"/></svg>
<svg style="left:932.7px;top:254px" width="58.3" height="39" viewBox="0 0 58.3 39">
<rect width="58.3" height="39" fill="#000"/>
<g transform="scale(0.0763 0.0766) translate(-45 -180)"><path fill="#fff" d="M100,578 L90,565 L83,548 L79,530 L77,510 L77,490 L78,470 L81,452 L85,434 L91,416 L99,400 L110,385 L125,370 L142,359 L160,350 L187,342 L215,340 L240,342 L260,345 L295,344 L330,345 L347,346 L370,349 L382,353 L395,358 L407,365 L428,374 L452,381 L470,386 L477,393 L470,402 L462,410 L459,414 L456,423 L449,435 L435,449 L421,459 L407,470 L400,480 L390,486 L382,489 L361,489 L351,491 L351,494 L353,512 L361,533 L368,554 L375,563 L400,563 L409,562 L414,568 L419,574 L421,580 L400,583 L330,581 L264,587 L155,582 Z"/><path fill="#000" d="M252.5,517 L254.5,517 L256,550 L259,560 L259,571 L244,571 L249,561 L252,550 Z M300,536 L305,537 L310,550 L316,561 L325,571 L335,578 L310,578 L303,572 L301,555 Z"/></g>
</svg>
<div class="t" style="left:997.30px;top:270.00px;font-size:7.65px;color:#e6e6e6;font-weight:normal;">Courbes 1</div>
<svg style="left:862.5px;top:310px" width="58.7" height="39.2" viewBox="0 0 58.7 39.2">
<defs><linearGradient id="ph310" x1="0" y1="0" x2="1" y2="0.6"><stop offset="0" stop-color="#b9c474"/><stop offset="0.5" stop-color="#b2c47c"/><stop offset="1" stop-color="#9bb86a"/></linearGradient>
<filter id="pb310" x="0" y="0" width="58.7" height="39.2" filterUnits="userSpaceOnUse"><feGaussianBlur stdDeviation="0.45"/></filter></defs>
<g filter="url(#pb310)">
<rect x="-1" y="-1" width="60.7" height="41.2" fill="url(#ph310)"/>
<ellipse cx="8" cy="5" rx="6" ry="4" fill="#9d8cc0" opacity="0.75"/><ellipse cx="24" cy="4" rx="5" ry="3.5" fill="#a899c8" opacity="0.7"/><ellipse cx="40" cy="10" rx="6" ry="6" fill="#a48fc6" opacity="0.7"/><ellipse cx="18" cy="14" rx="4" ry="3" fill="#b3a3d0" opacity="0.6"/><ellipse cx="53" cy="5" rx="5" ry="4" fill="#c4b8d8" opacity="0.7"/><ellipse cx="50" cy="22" rx="5" ry="5" fill="#b5a6cf" opacity="0.55"/><ellipse cx="6" cy="18" rx="3" ry="4" fill="#c9d08a" opacity="0.8"/>
<ellipse cx="32" cy="24" rx="5" ry="4" fill="#c9b9d8" opacity="0.6"/>
<path d="M0,29.5 Q20,28.5 40,30.5 L60,33 L60,40 L-1,40z" fill="#3a3f28"/>
<path d="M2.6,31 Q1.8,20 6,16 Q11,12.5 20,13 L23,12.5 Q28,12 31,15 L32,19 Q31,22 28,23 L27,28 L25,31 L22,31 L21,27 L18,30.5 L15,31 L10,31.3 L6,31.3 Z" fill="#56241a"/>
<path d="M4.5,18 Q10,13.2 21,13.5" stroke="#a84a20" stroke-width="1.6" fill="none"/>
<path d="M13,26 v5 M18,26 v4.5 M24,24 v7" stroke="#1f1410" stroke-width="2"/>
<path d="M20,13 Q25,11 29,13 Q32,15 32,19 Q31.5,22.5 28,23.5 Q23,23 21,20z" fill="#a4511f"/>
<ellipse cx="24.8" cy="15.8" rx="1.3" ry="2.6" fill="#e6dccf"/>
<ellipse cx="28.8" cy="21.4" rx="2.1" ry="1.6" fill="#d8cbb9"/>
<circle cx="27.6" cy="18.6" r="0.8" fill="#1a1a1a"/>

</g>
<rect x="0.25" y="0.25" width="58.2" height="38.7" fill="none" stroke="#3a3a3a" stroke-width="0.5"/>
</svg>
<div class="t" style="left:926.40px;top:327.00px;font-size:7.97px;color:#e6e6e6;font-weight:normal;">Calque 0 copie</div>
<svg style="left:862.5px;top:376.4px" width="58.7" height="39.2" viewBox="0 0 58.7 39.2">
<defs><linearGradient id="ph376" x1="0" y1="0" x2="1" y2="0.6"><stop offset="0" stop-color="#b9c474"/><stop offset="0.5" stop-color="#b2c47c"/><stop offset="1" stop-color="#9bb86a"/></linearGradient>
<filter id="pb376" x="0" y="0" width="58.7" height="39.2" filterUnits="userSpaceOnUse"><feGaussianBlur stdDeviation="0.45"/></filter></defs>
<g filter="url(#pb376)">
<rect x="-1" y="-1" width="60.7" height="41.2" fill="url(#ph376)"/>
<ellipse cx="8" cy="5" rx="6" ry="4" fill="#9d8cc0" opacity="0.75"/><ellipse cx="24" cy="4" rx="5" ry="3.5" fill="#a899c8" opacity="0.7"/><ellipse cx="40" cy="10" rx="6" ry="6" fill="#a48fc6" opacity="0.7"/><ellipse cx="18" cy="14" rx="4" ry="3" fill="#b3a3d0" opacity="0.6"/><ellipse cx="53" cy="5" rx="5" ry="4" fill="#c4b8d8" opacity="0.7"/><ellipse cx="50" cy="22" rx="5" ry="5" fill="#b5a6cf" opacity="0.55"/><ellipse cx="6" cy="18" rx="3" ry="4" fill="#c9d08a" opacity="0.8"/>
<ellipse cx="32" cy="24" rx="5" ry="4" fill="#c9b9d8" opacity="0.6"/>
<path d="M0,29.5 Q20,28.5 40,30.5 L60,33 L60,40 L-1,40z" fill="#3a3f28"/>
<path d="M2.6,31 Q1.8,20 6,16 Q11,12.5 20,13 L23,12.5 Q28,12 31,15 L32,19 Q31,22 28,23 L27,28 L25,31 L22,31 L21,27 L18,30.5 L15,31 L10,31.3 L6,31.3 Z" fill="#56241a"/>
<path d="M4.5,18 Q10,13.2 21,13.5" stroke="#a84a20" stroke-width="1.6" fill="none"/>
<path d="M13,26 v5 M18,26 v4.5 M24,24 v7" stroke="#1f1410" stroke-width="2"/>
<path d="M20,13 Q25,11 29,13 Q32,15 32,19 Q31.5,22.5 28,23.5 Q23,23 21,20z" fill="#a4511f"/>
<ellipse cx="24.8" cy="15.8" rx="1.3" ry="2.6" fill="#e6dccf"/>
<ellipse cx="28.8" cy="21.4" rx="2.1" ry="1.6" fill="#d8cbb9"/>
<circle cx="27.6" cy="18.6" r="0.8" fill="#1a1a1a"/>
<path d='M49,0 Q50,14 46,24 Q43,31 41,35' fill='none' stroke='#4d4a36' stroke-width='0.9'/>
</g>
<rect x="0.25" y="0.25" width="58.2" height="38.7" fill="none" stroke="#3a3a3a" stroke-width="0.5"/>
</svg>
<svg style="left:923.0px;top:390px" width="7" height="12" viewBox="0 0 7 12"><rect x="1" y="0.8" width="5" height="5" rx="2.5" fill="none" stroke="#e0e0e0" stroke-width="1"/><rect x="1" y="6.2" width="5" height="5" rx="2.5" fill="none" stroke="#e0e0e0" stroke-width="1"/><path d="M3.5,3.5 v5" stroke="#e0e0e0" stroke-width="1"/></svg>
<svg style="left:932.8px;top:376.4px" width="58.4" height="39.2" viewBox="0 0 58.4 39.2">
<rect width="58.4" height="39.2" fill="#000"/>
<g transform="scale(0.0764 0.077) translate(-45 -180)"><path fill="#fff" d="M100,578 L90,565 L83,548 L79,530 L77,510 L77,490 L78,470 L81,452 L85,434 L91,416 L99,400 L110,385 L125,370 L142,359 L160,350 L187,342 L215,340 L240,342 L260,345 L295,344 L330,345 L347,346 L370,349 L382,353 L395,358 L407,365 L428,374 L452,381 L470,386 L477,393 L470,402 L462,410 L459,414 L456,423 L449,435 L435,449 L421,459 L407,470 L400,480 L390,486 L382,489 L361,489 L351,491 L351,494 L353,512 L361,533 L368,554 L375,563 L400,563 L409,562 L414,568 L419,574 L421,580 L400,583 L330,581 L264,587 L155,582 Z"/><path fill="#000" d="M252.5,517 L254.5,517 L256,550 L259,560 L259,571 L244,571 L249,561 L252,550 Z M300,536 L305,537 L310,550 L316,561 L325,571 L335,578 L310,578 L303,572 L301,555 Z"/></g>
</svg>
<div class="t" style="left:997.50px;top:393.00px;font-size:7.77px;color:#e6e6e6;font-weight:normal;">Calque 0</div>
<svg style="left:862.6px;top:432.8px" width="58.6" height="39.2" viewBox="0 0 58.6 39.2">
<rect width="58.6" height="39.2" fill="#2c2c2c"/>
<rect x="0.7" y="0.5" width="57.2" height="30.8" fill="#e01dcf"/>
<rect x="0.7" y="31.3" width="57.2" height="1.6" fill="#e58ad9"/>
<rect x="0.7" y="32.9" width="57.2" height="1.2" fill="#6e6e6e"/>
<rect x="0.7" y="34.1" width="57.2" height="4.4" fill="#d6d6d6"/>
<rect x="2" y="35.1" width="54.6" height="1" fill="#555"/>
<path d="M26.6,38.4 L29.1,35.1 L31.6,38.4Z" fill="#000"/>
</svg>
<svg style="left:923.0px;top:446.5px" width="7" height="12" viewBox="0 0 7 12"><rect x="1" y="0.8" width="5" height="5" rx="2.5" fill="none" stroke="#e0e0e0" stroke-width="1"/><rect x="1" y="6.2" width="5" height="5" rx="2.5" fill="none" stroke="#e0e0e0" stroke-width="1"/><path d="M3.5,3.5 v5" stroke="#e0e0e0" stroke-width="1"/></svg>
<div class="a" style="left:932.8px;top:432.8px;width:58.4px;height:38.5px;background:#fff;"></div>
<div class="t" style="left:997.50px;top:449.00px;font-size:7.42px;color:#e6e6e6;font-weight:normal;">Fond 1</div>
<div class="a" style="left:837px;top:781px;width:329px;height:19px;background:#474747;border-top:1px solid #3c3c3c"></div>
<svg style="left:1010px;top:782px" width="150" height="17" viewBox="1010 782 150 17" fill="none" stroke="#dcdcdc">
<path d="M1017,790 h-1 a2.5,2.5 0 0 1 0,-5 h3 a2.5,2.5 0 0 1 2.5,2.5 M1025,787 h1 a2.5,2.5 0 0 1 0,5 h-3 a2.5,2.5 0 0 1 -2.5,-2.5" stroke="#888" stroke-width="1"/>
<text x="1038.5" y="793.5" font-size="10" font-style="italic" font-family="Liberation Serif" fill="#dcdcdc" stroke="none">fx</text><rect x="1047" y="795" width="1.5" height="1" fill="#ddd" stroke="none"/>
<rect x="1057.5" y="785.5" width="10" height="7" fill="#dcdcdc" stroke="none"/><circle cx="1062.5" cy="789" r="2" fill="#474747" stroke="none"/>
<circle cx="1082" cy="789.5" r="4" stroke-width="1.2"/><path d="M1084.8,786.7 a4,4 0 0 1 -5.6,5.6z" fill="#dcdcdc" stroke="none"/><rect x="1086" y="794" width="1.5" height="1" fill="#ddd" stroke="none"/>
<path d="M1097,786 h3.5 l1,1 h4.5 v6 h-9z" fill="#dcdcdc" stroke="none"/>
<rect x="1117.5" y="785.5" width="8" height="8" stroke-width="1.1"/><path d="M1121.5,787.5 v4 M1119.5,789.5 h4" stroke-width="1.1"/>
<path d="M1138,786.5 h8 M1140.5,786.5 v-1 h3 v1 M1139,787.5 v6.5 h6 v-6.5" stroke-width="1.1"/><path d="M1141,789 v3.5 M1143,789 v3.5" stroke-width="0.7"/>
</svg>
<div class="a" style="left:1166px;top:60px;width:256px;height:740px;background:#3a3a3a;"></div>
<div class="a" style="left:1169px;top:144px;width:28.5px;height:656px;background:#474747;"></div>
<div class="a" style="left:1169px;top:171.3px;width:28.5px;height:1px;background:#3c3c3c;"></div>
<div class="a" style="left:1169px;top:201.3px;width:28.5px;height:1px;background:#3c3c3c;"></div>
<svg style="left:1170px;top:146px" width="28" height="55" viewBox="1170 146 28 55" fill="#e0e0e0" stroke="#e0e0e0">
<path d="M1176,155 h14 M1177,161.5 h10" stroke-width="1.6"/><circle cx="1180" cy="155" r="2.5" stroke="none"/><path d="M1186,158.5 a3.2,3.2 0 0 1 0,6.4z" stroke="none"/>
<rect x="1177" y="182" width="1.3" height="1.3" stroke="none"/><rect x="1177" y="184.5" width="1.3" height="1.3" stroke="none"/><rect x="1177" y="187" width="1.3" height="1.3" stroke="none"/><rect x="1179.5" y="182" width="2" height="1.3" stroke="none"/><rect x="1179.5" y="184.5" width="2" height="1.3" stroke="none"/><rect x="1179.5" y="187" width="2" height="1.3" stroke="none"/>
<circle cx="1186" cy="185" r="2.2" stroke="none"/><rect x="1185" y="186" width="2" height="4" stroke="none"/><rect x="1181.5" y="190" width="9" height="2.5" stroke="none"/><rect x="1181.5" y="193.3" width="9" height="1" stroke="none"/>
</svg>
<div class="a" style="left:1200px;top:144px;width:222px;height:104px;background:#474747;"></div>
<div class="a" style="left:1203px;top:144px;width:191px;height:42px;background:#3a3a3a;"></div>
<svg style="left:1203px;top:144px" width="191" height="43" viewBox="1203 144 191 43">
<path fill="#fff" d="M1204.1,185.9 L1205.5,182.8 L1206.9,180.6 L1208.0,173.1 L1209.1,167.5 L1210.6,144.0 L1211.6,144.0 L1212.6,144.0 L1213.6,144.0 L1214.7,144.0 L1215.7,144.0 L1216.7,144.0 L1217.7,144.0 L1218.7,144.0 L1219.7,144.0 L1220.8,144.0 L1221.8,144.0 L1222.8,144.0 L1223.8,144.0 L1225.0,146.6 L1226.3,147.3 L1227.5,150.6 L1228.6,151.8 L1229.6,152.4 L1230.7,152.7 L1231.8,154.9 L1232.9,154.8 L1233.9,156.9 L1235.0,158.1 L1236.1,158.1 L1237.1,159.2 L1238.2,161.1 L1239.3,163.2 L1240.4,162.5 L1241.4,163.8 L1242.5,165.6 L1243.6,166.5 L1244.6,167.8 L1245.7,167.4 L1246.8,167.5 L1247.9,169.6 L1248.9,167.7 L1250.0,169.4 L1251.1,170.9 L1252.2,170.0 L1253.4,170.2 L1254.5,170.6 L1255.6,172.2 L1256.7,170.6 L1257.9,170.8 L1259.0,168.0 L1260.2,167.9 L1261.3,166.6 L1262.4,166.8 L1263.5,165.9 L1264.7,166.1 L1265.8,164.7 L1266.9,165.6 L1268.2,163.5 L1269.4,163.0 L1270.7,162.8 L1271.9,162.6 L1273.2,161.3 L1274.4,160.9 L1275.5,159.1 L1276.6,158.5 L1277.8,156.9 L1278.9,155.2 L1280.0,154.4 L1281.4,153.8 L1282.8,151.6 L1284.0,153.3 L1285.2,153.3 L1286.3,155.3 L1287.5,156.3 L1288.6,157.1 L1289.8,158.8 L1290.9,159.1 L1292.1,158.7 L1293.2,160.0 L1294.3,160.1 L1295.4,156.8 L1296.6,156.4 L1297.7,156.2 L1298.8,154.4 L1299.9,151.4 L1301.0,150.2 L1302.2,147.0 L1303.3,146.5 L1304.4,144.0 L1305.4,144.0 L1306.4,144.0 L1307.4,144.0 L1308.4,144.0 L1309.4,144.0 L1310.4,144.0 L1311.5,144.0 L1312.5,144.0 L1313.5,144.0 L1314.5,144.0 L1315.5,144.0 L1316.5,144.0 L1317.5,144.0 L1318.5,144.0 L1319.5,144.0 L1320.5,144.0 L1321.5,144.0 L1322.5,144.0 L1323.5,144.0 L1324.5,144.0 L1325.6,144.0 L1326.6,144.0 L1327.6,144.0 L1328.6,144.0 L1329.6,144.0 L1330.6,144.0 L1331.6,144.0 L1332.6,144.0 L1333.6,144.0 L1334.6,144.0 L1335.6,144.0 L1336.6,144.0 L1337.6,144.0 L1338.6,144.0 L1339.7,144.0 L1340.7,144.0 L1341.7,144.0 L1342.7,144.0 L1343.7,144.0 L1344.7,144.0 L1345.7,144.0 L1346.9,146.3 L1348.2,147.4 L1349.4,148.8 L1350.5,150.9 L1351.6,150.6 L1352.8,152.7 L1353.9,153.5 L1355.0,154.4 L1356.5,156.0 L1357.9,157.2 L1359.7,152.5 L1361.6,160.0 L1363.0,165.5 L1364.4,171.3 L1365.7,175.0 L1366.9,178.1 L1368.2,179.7 L1369.6,182.4 L1371.0,185.3 L1372.0,185.3 L1373.1,185.4 L1374.1,185.4 L1375.2,185.4 L1376.2,185.5 L1377.2,185.5 L1378.3,185.5 L1379.3,185.6 L1380.3,185.6 L1381.4,185.6 L1382.4,185.7 L1383.5,185.7 L1384.5,185.7 L1385.5,185.8 L1386.6,185.8 L1387.6,185.8 L1388.7,185.9 L1389.7,185.9 L1389.7,186 L1204.1,186 Z"/>
</svg>
<div class="t" style="left:1203.60px;top:193.00px;font-size:7.8px;color:#d0d0d0;font-weight:normal;">Source :</div>
<div class="a" style="left:1237.8px;top:190.4px;width:173.5px;height:12.4px;background:#3a3a3a;border-radius:2px"></div>
<div class="t" style="left:1243.10px;top:193.00px;font-size:7.95px;color:#e0e0e0;font-weight:normal;">Image entière</div>
<svg style="left:1403px;top:195px" width="6" height="4"><path d="M0.5,0.5 l2.3,2.3 l2.3,-2.3" fill="none" stroke="#cfcfcf" stroke-width="1"/></svg>
<div class="t" style="right:182.30px;top:208.00px;font-size:7.8px;color:#d0d0d0;font-weight:normal;">Moyenne :</div>
<div class="t" style="left:1244.90px;top:208.00px;font-size:7.8px;color:#d8d8d8;font-weight:normal;">117,09</div>
<div class="t" style="right:60.60px;top:208.00px;font-size:7.8px;color:#d0d0d0;font-weight:normal;">Niveau :</div>
<div class="t" style="right:182.30px;top:217.00px;font-size:7.8px;color:#d0d0d0;font-weight:normal;">Std Dev :</div>
<div class="t" style="left:1244.90px;top:217.00px;font-size:7.8px;color:#d8d8d8;font-weight:normal;">63,82</div>
<div class="t" style="right:60.60px;top:217.00px;font-size:7.8px;color:#d0d0d0;font-weight:normal;">Nombre :</div>
<div class="t" style="right:182.30px;top:227.00px;font-size:7.8px;color:#d0d0d0;font-weight:normal;">Médiane :</div>
<div class="t" style="left:1244.90px;top:227.00px;font-size:7.8px;color:#d8d8d8;font-weight:normal;">133</div>
<div class="t" style="right:60.60px;top:227.00px;font-size:7.8px;color:#d0d0d0;font-weight:normal;">% plus sombre :</div>
<div class="t" style="right:182.30px;top:236.00px;font-size:7.8px;color:#d0d0d0;font-weight:normal;">Pixels :</div>
<div class="t" style="left:1244.90px;top:236.00px;font-size:7.8px;color:#d8d8d8;font-weight:normal;">710016</div>
<div class="t" style="right:60.60px;top:236.00px;font-size:7.8px;color:#d0d0d0;font-weight:normal;">Niveau de cache :</div>
<div class="t" style="left:1366.80px;top:236.00px;font-size:7.8px;color:#d8d8d8;font-weight:normal;">4</div>
<div class="a" style="left:1200px;top:248px;width:222px;height:3px;background:#3a3a3a;"></div>
<div class="a" style="left:1200px;top:251px;width:222px;height:10px;background:#3a3a3a;"></div>
<div class="a" style="left:1264.8px;top:251px;width:47.8px;height:10px;background:#474747;"></div>
<div class="t" style="left:1205.10px;top:258.00px;font-size:7.8px;color:#bdbdbd;font-weight:bold;-webkit-text-stroke:0;">Bibliothèques</div>
<div class="t" style="left:1269.60px;top:258.00px;font-size:7.8px;color:#eeeeee;font-weight:bold;-webkit-text-stroke:0;">Réglages</div>
<div class="a" style="left:1410px;top:257px;width:8px;height:2px;background:#888;"></div>
<div class="a" style="left:1200px;top:757px;width:222px;height:43px;background:#474747;"></div>
<div class="a" style="left:1166px;top:757px;width:3px;height:43px;background:#3a3a3a;"></div>
<div class="a" style="left:1197.5px;top:757px;width:2.5px;height:43px;background:#3a3a3a;"></div>
<div class="a" style="left:1200px;top:781px;width:222px;height:1px;background:#3c3c3c;"></div>
<svg style="left:1320px;top:782px" width="102" height="17" viewBox="1320 782 102 17" fill="none" stroke="#dcdcdc">
<circle cx="1329" cy="789.5" r="3.8" stroke-dasharray="1.2 1" stroke-width="1"/>
<rect x="1345.5" y="785.5" width="10" height="7" fill="#888" stroke="none"/><circle cx="1350.5" cy="789" r="2" fill="#474747" stroke="none"/>
<rect x="1369.5" y="785.5" width="8" height="8" stroke-width="1.1"/><path d="M1373.5,787.5 v4 M1371.5,789.5 h4" stroke-width="1.1"/>
<path d="M1391,786.5 h8 M1393.5,786.5 v-1 h3 v1 M1392,787.5 v6.5 h6 v-6.5" stroke-width="1.1"/>
</svg>
<div class="a" style="left:1035px;top:262px;width:387px;height:495px;background:#474747;border-left:1px solid #2f2f2f;box-shadow:-1px 1px 3px rgba(0,0,0,0.35)"></div>
<div class="a" style="left:1036px;top:262px;width:386px;height:9px;background:#3d3d3d;"></div>
<svg style="left:1039px;top:264px" width="7" height="6"><path d="M0.8,0.5 l5,5 M5.8,0.5 l-5,5" stroke="#d0d0d0" stroke-width="1"/></svg>
<div class="a" style="left:1036px;top:271px;width:386px;height:20.5px;background:#383838;"></div>
<div class="a" style="left:1036px;top:271px;width:53px;height:20.5px;background:#474747;"></div>
<div class="a" style="left:1089px;top:271px;width:62px;height:20.5px;background:#3c3c3c;"></div>
<div class="t" style="left:1042.30px;top:278.00px;font-size:7.93px;color:#ececec;font-weight:bold;-webkit-text-stroke:0;">Propriétés</div>
<div class="t" style="left:1094.90px;top:278.00px;font-size:8.1px;color:#a8a8a8;font-weight:bold;-webkit-text-stroke:0;">Informations</div>
<div class="a" style="left:1044.7px;top:296px;width:15.8px;height:15.9px;background:#333;"></div>
<div class="a" style="left:1046px;top:300px;width:12.5px;height:9px;background:#e6e6e6;"></div>
<svg style="left:1048px;top:301px" width="8" height="8"><circle cx="4.2" cy="3.6" r="2.5" fill="#222"/></svg>
<div class="t" style="left:1063.90px;top:302.00px;font-size:7.8px;color:#d8d8d8;font-weight:normal;">Masques</div>
<div class="a" style="left:1036px;top:316px;width:386px;height:1px;background:#3b3b3b;"></div>
<svg style="left:1041.7px;top:326.7px" width="23" height="15.4" viewBox="0 0 23 15.4">
<g transform="scale(0.0301 0.03026) translate(-45 -180)"><rect x="45" y="180" width="764" height="509" fill="#fff"/><path fill="#000" d="M40,555 L45,556 L60,560 L75,564 L90,572 L103,578 L155,582 L264,587 L330,581 L421,580 L427,580 L438,583 L443,589 L462,591 L500,592.5 L518,593 L527,592 L542,594 L547,590 L552,588 L556,591 L563,592 L568,589 L573,592 L592,594 L607,600 L614,604 L611,607 L627,611 L651,617 L695,623 L711,625 L754,631 L809,639 L814,640 L814,694 L40,694 Z M100,578 L90,565 L83,548 L79,530 L77,510 L77,490 L78,470 L81,452 L85,434 L91,416 L99,400 L110,385 L125,370 L142,359 L160,350 L187,342 L215,340 L240,342 L260,345 L295,344 L330,345 L347,346 L370,349 L382,353 L395,358 L407,365 L428,374 L452,381 L470,386 L477,393 L470,402 L462,410 L459,414 L456,423 L449,435 L435,449 L421,459 L407,470 L400,480 L390,486 L382,489 L361,489 L351,491 L351,494 L353,512 L361,533 L368,554 L375,563 L400,563 L409,562 L414,568 L419,574 L421,580 L400,583 L330,581 L264,587 L155,582 Z"/></g>
</svg>
<div class="t" style="left:1067.70px;top:331.00px;font-size:7.97px;color:#d8d8d8;font-weight:normal;">Masque de fusion</div>
<div class="a" style="left:1391.2px;top:327.2px;width:15.5px;height:15.1px;background:#303030;"></div>
<div class="a" style="left:1393.2px;top:330.5px;width:11.8px;height:8.8px;background:#e6e6e6;"></div>
<svg style="left:1395.9px;top:331.9px" width="6" height="6"><circle cx="3" cy="3" r="2.1" fill="#1a1a1a"/></svg>
<svg style="left:1411px;top:329px" width="12" height="12" viewBox="0 0 12 12" fill="none" stroke="#dcdcdc" stroke-width="1.1"><rect x="1.5" y="1.5" width="7" height="7"/><rect x="0.3" y="0.3" width="2.4" height="2.4" fill="#dcdcdc" stroke="none"/><rect x="7.3" y="0.3" width="2.4" height="2.4" fill="#dcdcdc" stroke="none"/><rect x="0.3" y="7.3" width="2.4" height="2.4" fill="#dcdcdc" stroke="none"/><rect x="6" y="6" width="6" height="6" fill="#dcdcdc" stroke="none"/><path d="M9,7 v4 M7,9 h4" stroke="#474747" stroke-width="0.9"/></svg>
<div class="a" style="left:1036px;top:357px;width:386px;height:1px;background:#3b3b3b;"></div>
<div class="t" style="left:1044.40px;top:374.00px;font-size:8.03px;color:#d8d8d8;font-weight:normal;">Densité :</div>
<div class="a" style="left:1377.4px;top:371.4px;width:44px;height:10.3px;background:#3c3c3c;"></div>
<div class="t" style="left:1379.80px;top:374.00px;font-size:7.48px;color:#e0e0e0;font-weight:normal;">100 %</div>
<div class="a" style="left:1048.3px;top:385.6px;width:374px;height:2.2px;background:#5f5f5f;"></div>
<svg style="left:1413px;top:387px" width="12" height="10" viewBox="0 0 12 10"><path d="M1,8.5 L6,1 L11,8.5z" fill="#f0f0f0" stroke="#222" stroke-width="1" stroke-linejoin="round"/></svg>
<div class="t" style="left:1044.40px;top:416.00px;font-size:8.13px;color:#d8d8d8;font-weight:normal;">Contour progressif :</div>
<div class="a" style="left:1377.4px;top:413px;width:44px;height:10.3px;background:#3c3c3c;"></div>
<div class="t" style="left:1379.80px;top:415.00px;font-size:8.0px;color:#e0e0e0;font-weight:normal;">0,0 px</div>
<div class="a" style="left:1048.3px;top:426.5px;width:369.6px;height:2.2px;background:#5f5f5f;"></div>
<svg style="left:1041.5px;top:428.5px" width="12" height="10" viewBox="0 0 12 10"><path d="M1,8.5 L6,1 L11,8.5z" fill="#f0f0f0" stroke="#222" stroke-width="1" stroke-linejoin="round"/></svg>
<div class="t" style="left:1040.80px;top:456.00px;font-size:7.98px;color:#d8d8d8;font-weight:normal;">Améliorer :</div>
<div class="a" style="left:1291px;top:454.6px;width:131px;height:16px;background:#3b3b3b;border:1px solid #404040;border-radius:2px"></div>
<div class="t" style="left:1310.20px;top:460.00px;font-size:8.07px;color:#e0e0e0;font-weight:normal;">Sélectionner et masquer...</div>
<div class="a" style="left:1291px;top:480.2px;width:131px;height:16px;background:#3b3b3b;border:1px solid #404040;border-radius:2px"></div>
<div class="t" style="left:1321.80px;top:485.00px;font-size:8.04px;color:#e0e0e0;font-weight:normal;">Plage de couleurs...</div>
<div class="a" style="left:1291px;top:506px;width:131px;height:16px;background:#3b3b3b;border:1px solid #404040;border-radius:2px"></div>
<div class="t" style="left:1342.60px;top:511.00px;font-size:8.03px;color:#e0e0e0;font-weight:normal;">Inverser</div>
<div class="a" style="left:1036px;top:732.5px;width:386px;height:18.5px;background:#474747;border-top:1px solid #3b3b3b"></div>
<div class="a" style="left:1036px;top:751px;width:386px;height:6px;background:#3a3a3a;"></div>
<div class="a" style="left:1385px;top:733.5px;width:20px;height:17.5px;background:#353535;"></div>
<svg style="left:1340px;top:734px" width="82" height="16" viewBox="1340 734 82 16" fill="none" stroke="#cfcfcf">
<rect x="1347.5" y="737.5" width="8" height="8" stroke-dasharray="1.2 1.2" stroke-width="1"/>
<path d="M1373,736.5 l5,4 l-5,4 l-5,-4z" stroke="#8a8a8a" stroke-width="1"/><circle cx="1373" cy="740.5" r="1.3" fill="#8a8a8a" stroke="none"/>
<path d="M1389.8,741 Q1395,736 1400.2,741 Q1395,746 1389.8,741z" stroke="#f0f0f0" stroke-width="1.2"/><circle cx="1395" cy="741" r="1.8" fill="#f0f0f0" stroke="none"/>
<path d="M1412,737.5 h8 M1414.5,737.5 v-1 h3 v1 M1413,738.5 v6.5 h6 v-6.5" stroke-width="1.1"/>
</svg>
<svg style="left:1166px;top:0;overflow:hidden" width="256" height="144" viewBox="0 0 256 144">
<defs>
<filter id="bl" x="-5%" y="-5%" width="110%" height="110%"><feGaussianBlur stdDeviation="0.9"/></filter>
<linearGradient id="wallL" x1="0" x2="1" y1="0" y2="1"><stop offset="0" stop-color="#d7d1cd"/><stop offset="1" stop-color="#cdc6c1"/></linearGradient>
<linearGradient id="shirt" x1="0" y1="0" x2="0" y2="1"><stop offset="0" stop-color="#85724f"/><stop offset="1" stop-color="#776545"/></linearGradient>
<radialGradient id="skin" cx="0.55" cy="0.4" r="0.6"><stop offset="0" stop-color="#e0ad95"/><stop offset="1" stop-color="#c48c72"/></radialGradient>
</defs>
<g filter="url(#bl)">
<rect x="-5" y="-5" width="270" height="155" fill="url(#wallL)"/>
<rect x="135" y="-5" width="40" height="155" fill="#dcd7d1"/>
<rect x="133.2" y="-5" width="2.2" height="89" fill="#8f8a85"/>
<rect x="174.6" y="-5" width="90" height="155" fill="#beb8b4"/>
<rect x="190.8" y="48.6" width="37" height="41.4" fill="#1d1d1d"/>
<rect x="193.5" y="51.3" width="31.5" height="36" fill="#ebe9e6"/>
<rect x="197" y="57.6" width="22.6" height="23.4" fill="#3e3e3e"/>
<path d="M201,60 q5,10 0,19 M208,60 q-3,10 1,19 M214,60 q4,10 0,19" stroke="#a8a8a8" stroke-width="1.8" fill="none"/>
<rect x="172.8" y="65.7" width="11.7" height="8" fill="#eceae6"/>
<rect x="168.3" y="66.6" width="2.7" height="21.6" fill="#a39d95"/>
<rect x="160" y="72" width="11" height="2.7" fill="#a39d95"/>
<rect x="145.8" y="103.5" width="96.2" height="45" fill="#141414"/>
<rect x="163" y="88.2" width="70" height="22.5" fill="#1b1b1b" rx="1"/>
<rect x="163" y="88.2" width="70" height="3" fill="#2b2b2b"/>
<rect x="184.5" y="108" width="9" height="4.5" fill="#9ea0c0"/>
<rect x="154" y="124" width="12.5" height="22" fill="#d8d5cf"/>
<rect x="169" y="126" width="24" height="18" fill="#242424"/>
<path d="M41.4,64.8 L25.2,72.0 L12.6,81.0 L6.3,90.0 L7.2,104.4 L16.2,97.2 L28.8,86.4 L43.2,79.2Z" fill="#161616"/>
<path d="M36.8,45.4 L39.5,39.9 L47.8,38.5 L49.1,33.0 L56.0,31.6 L58.8,35.8 L60.1,45.4 L63.6,66.0 L64.3,77.0 L50.5,81.2 L38.1,82.5 L35.4,66.0Z" fill="#121212"/>
<rect x="53.3" y="57.8" width="8" height="6.8" fill="#7a1a24"/>
<path d="M57.4,66.0 L67.0,60.5 L111.0,71.5 L113.8,85.3 L105.5,101.8 L91.8,108.7 L75.3,105.9 L64.3,85.3Z" fill="#a07a62"/>
<path d="M-1.8,151.3 L0.0,117.1 L14.5,93.5 L59.4,71.9 L61.5,74.3 L69.8,89.4 L79.4,100.4 L91.8,104.5 L102.8,96.3 L108.3,82.5 L111.0,77.0 L123.4,79.8 L135.0,84.6 L144.0,110.0 L154.8,147.6Z" fill="url(#shirt)"/>
<ellipse cx="90.9" cy="146.7" rx="31.0" ry="28.8" fill="#857448" stroke="#b5a778" stroke-width="0.8"/>
<path d="M64.8,136.8 Q75.6,126.0 93.6,124.2 Q111.6,126.0 119.7,136.8 L119.7,147.6 L64.8,147.6 Z" fill="#c4b544"/>
<path d="M72.0,133.2 L100.8,136.8 M75.6,140.4 L115.2,138.6" stroke="#8f8530" stroke-width="0.8"/>
<path d="M71.1,41.3 L61.5,40.6 L56.0,45.4 L58.1,55.0 L64.3,61.9 L72.5,61.9Z" fill="#c98f76"/>
<path d="M68.4,39.9 L72.5,34.4 L78.0,23.4 L86.3,17.9 L98.6,19.3 L109.0,23.4 L111.0,31.6 L113.8,41.3 L116.5,49.5 L115.8,55.0 L111.0,57.8 L110.3,64.6 L108.3,74.3 L102.8,79.8 L94.5,81.2 L86.3,77.0 L75.3,67.4 L71.1,60.5Z" fill="url(#skin)"/>
<path d="M72.5,52.3 L75.3,64.6 L83.5,74.3 L94.5,81.2 L102.8,79.8 L108.3,74.3 L110.3,66.0 L105.5,64.6 L97.3,61.9 L91.8,60.5 L86.3,55.0 L79.4,50.9Z" fill="#8c7264" opacity="0.85"/>
<path d="M58.1,41.3 L58.8,23.4 L65.6,13.8 L79.4,8.3 L93.1,9.6 L104.2,15.1 L109.0,23.4 L98.6,19.3 L86.3,17.9 L78.0,23.4 L72.5,34.4 L68.4,39.9 L63.6,44.0Z" fill="#56483f"/>
<path d="M65.6,39.2 L117.9,39.9" stroke="#4a4440" stroke-width="1"/>
<rect x="89.0" y="39.2" width="28.9" height="7.6" rx="2" fill="none" stroke="#7a7470" stroke-width="0.6"/>
<path d="M95.9,62.6 Q104.2,60.5 111.0,61.9 Q104.2,68.1 95.9,62.6Z" fill="#5b2f2a"/>
<circle cx="104.2" cy="98.3" r="1.5" fill="#1a1a1a"/>
</g>
</svg>
<div class="a" style="left:456.5px;top:707px;width:509px;height:63.5px;background:#efc54b;border-radius:9px;border:1px solid #1a1a1a"></div>
<svg style="left:680px;top:712px" width="60" height="52" viewBox="680 712 60 52">
<path d="M690.7,723.4 H703 L718.6,755 H731.4 M714.8,723.4 H731" fill="none" stroke="#3a2c08" stroke-opacity="0.75" stroke-width="3.2" transform="translate(-0.3,1)"/>
<path d="M690.7,723.2 H703 L718.6,754.8 H731.4 M714.8,723.2 H731" fill="none" stroke="#fdfdfd" stroke-width="3.2"/>
</svg>
</body></html>
